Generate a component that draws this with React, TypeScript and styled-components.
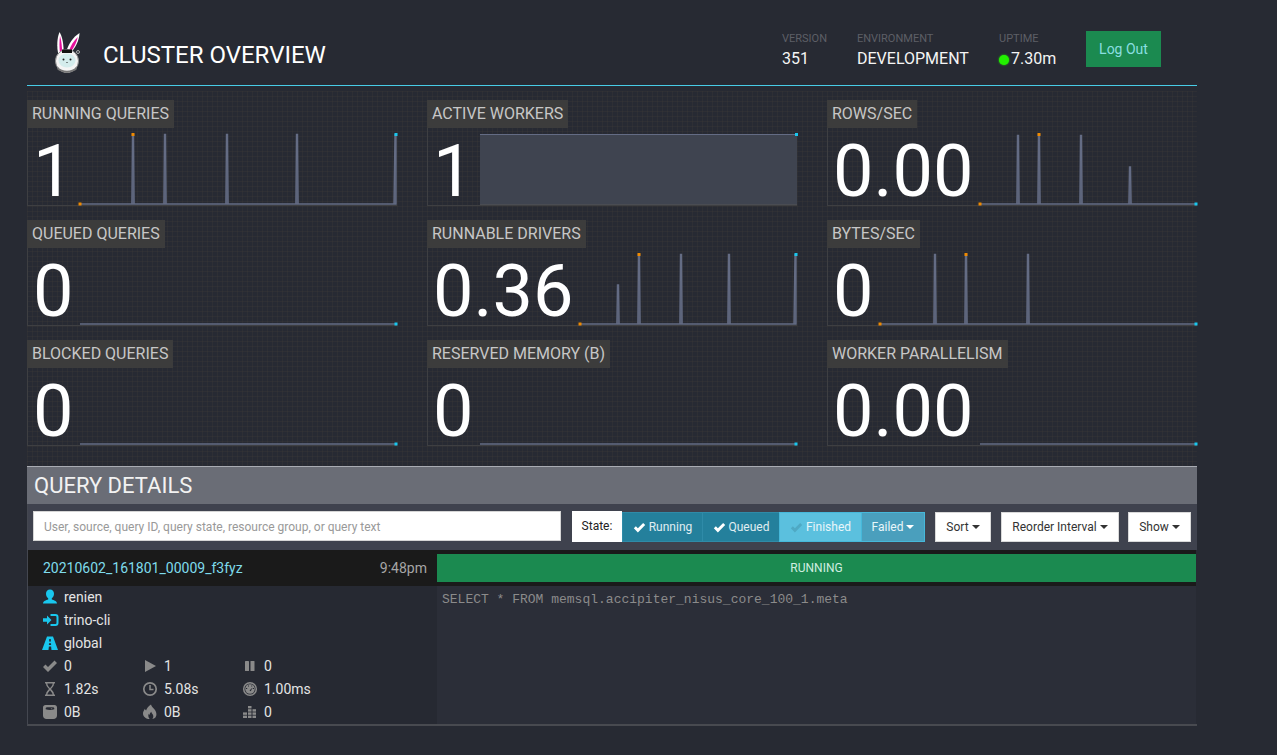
import React from "react";
import styled, { createGlobalStyle } from "styled-components";

const Global = createGlobalStyle`
  html, body { margin: 0; padding: 0; background: #272a33; }
  body { font-family: Roboto, "Liberation Sans", sans-serif; color: #fff; }
  * { box-sizing: border-box; }
`;

const Page = styled.div`
  width: 1170px;
  margin-left: 27px;
  height: 755px;
  padding-top: 22px;
`;

const Header = styled.header`
  height: 64px;
  display: flex;
  align-items: flex-start;
  border-bottom: 1px solid #48cde8;
  padding-right: 36px;
`;

const Brand = styled.div`
  display: flex;
  align-items: center;
  margin-left: 26px;
  gap: 22px;
  height: 42px;
  margin-top: 9px;
`;

const Title = styled.h1`
  margin: 0;
  font-size: 24px;
  font-weight: 400;
  line-height: 34px;
  color: #fff;
  position: relative;
  top: 3px;
`;

const Meta = styled.div`
  margin-left: auto;
  display: flex;
  align-items: flex-start;
  padding-top: 9px;
`;

const MetaItem = styled.div<{ $w: number }>`
  width: ${(p) => p.$w}px;
  display: flex;
  flex-direction: column;
`;

const MetaLabel = styled.span`
  font-size: 11px;
  line-height: 15px;
  color: #5d5f66;
  text-transform: uppercase;
`;

const MetaValue = styled.span`
  font-size: 16px;
  line-height: 21px;
  margin-top: 2px;
  color: #f5f5f5;
  display: flex;
  align-items: center;
  gap: 2px;
`;

const StatusDot = styled.span`
  width: 10px;
  height: 10px;
  border-radius: 50%;
  background: #22f000;
  box-shadow: 0 0 2px #22f000;
  margin-top: 2px;
`;

const LogOut = styled.button`
  width: 75px;
  height: 36px;
  border: 0;
  background: #1b8a50;
  color: #8adfe0;
  font: 400 14px Roboto, sans-serif;
`;

const StatsArea = styled.section`
  margin-top: 5px;
  height: 375px;
  padding-top: 9px;
  background-color: #272a33;
  background-image:
    linear-gradient(to right, rgba(66, 62, 56, 0.26) 1px, transparent 1px),
    linear-gradient(to bottom, rgba(66, 62, 56, 0.26) 1px, transparent 1px);
  background-size: 5px 5px;
  display: grid;
  grid-template-columns: repeat(3, 370px);
  grid-auto-rows: 106px;
  column-gap: 30px;
  row-gap: 14px;
`;

const Card = styled.div`
  position: relative;
  border-left: 1px solid #3e3f42;
  border-bottom: 1px solid #3e3f42;
  height: 106px;
  display: flex;
  flex-direction: column;
`;

const CardLabel = styled.div`
  align-self: flex-start;
  margin-left: -1px;
  height: 28px;
  padding: 0 5px;
  background: #3c3c3c;
  color: #c7c7c7;
  font-size: 16px;
  line-height: 28px;
  white-space: nowrap;
`;

const CardBody = styled.div`
  display: flex;
  flex: 1;
  min-height: 0;
`;

const BigValue = styled.div<{ $w: number }>`
  width: ${(p) => p.$w}px;
  flex: none;
  padding-left: 5px;
  font-size: 72px;
  line-height: 88px;
  font-weight: 400;
  color: #fff;
`;

const Spark = styled.svg`
  display: block;
  flex: none;
  overflow: visible;
  margin-top: 6px;
`;

const Details = styled.section`
  border-left: 1px solid #444750;
  border-bottom: 2px solid #484a50;
  height: 260px;
  display: flex;
  flex-direction: column;
`;

const DetailsHead = styled.div`
  margin-left: -1px;
  height: 38px;
  border-top: 1px solid #a9acb3;
  background: #6a6d76;
  color: #f2f2f2;
  font-size: 22px;
  line-height: 37px;
  padding-left: 7px;
`;

const Toolbar = styled.div`
  height: 46px;
  background: #3f424e;
  display: flex;
  align-items: flex-start;
  padding: 7px 0 0 5px;
`;

const Search = styled.input`
  width: 528px;
  height: 30px;
  border: 1px solid #d5d5d5;
  background: #fff;
  padding: 2px 10px 0;
  font: 400 12px Roboto, sans-serif;
  outline: none;
  &::placeholder { color: #999; opacity: 1; }
`;

const StateLabel = styled.span`
  margin-left: 11px;
  width: 50px;
  height: 31px;
  background: #fff;
  color: #222;
  font-size: 12px;
  line-height: 31px;
  text-align: center;
`;

const Seg = styled.div`
  display: flex;
  height: 30px;
  margin-top: 1px;
`;

const SegBtn = styled.div<{ $w: number; $kind: "on" | "off" | "drop" }>`
  width: ${(p) => p.$w}px;
  display: flex;
  align-items: center;
  justify-content: center;
  gap: 3px;
  font-size: 12px;
  border: 1px solid #46b8da;
  margin-left: -1px;
  &:first-child { margin-left: 0; }
  background: ${(p) =>
    p.$kind === "on" ? "#24809c" : p.$kind === "off" ? "#5bc0de" : "#4a9fbd"};
  border-color: ${(p) => (p.$kind === "on" ? "#2f8ba8" : "#46b8da")};
  color: ${(p) => (p.$kind === "on" ? "#e0eef2" : "#e8f6fa")};
`;

const Caret = styled.span<{ $light?: boolean }>`
  width: 0;
  height: 0;
  border-left: 4px solid transparent;
  border-right: 4px solid transparent;
  border-top: 4px solid ${(p) => (p.$light ? "#fff" : "#333")};
`;

const Plain = styled.div<{ $w: number; $ml: number }>`
  width: ${(p) => p.$w}px;
  margin-left: ${(p) => p.$ml}px;
  margin-top: 1px;
  height: 30px;
  background: #fff;
  border: 1px solid #d9d9d9;
  color: #333;
  font-size: 12px;
  display: flex;
  align-items: center;
  justify-content: center;
  gap: 3px;
`;

const QueryRow = styled.div`
  flex: 1;
  display: flex;
  min-height: 0;
  margin-right: 1px;
`;

const LeftCol = styled.div`
  width: 409px;
  flex: none;
  background: #262932;
`;

const RowHead = styled.div`
  height: 36px;
  background: #1a1a1a;
  display: flex;
  align-items: center;
  justify-content: space-between;
  padding: 0 10px 0 15px;
  font-size: 14px;
`;

const QueryId = styled.span`
  color: #7fdcec;
`;

const QueryTime = styled.span`
  color: #a6a6a6;
`;

const Rows = styled.div`
  padding: 0 0 0 15px;
`;

const InfoRow = styled.div`
  height: 23px;
  display: flex;
  align-items: center;
  font-size: 14px;
  color: #e4e4e4;
  &:first-child { margin-top: -1px; }
`;

const Stat = styled.div`
  width: 100px;
  display: flex;
  align-items: center;
`;

const IconBox = styled.span`
  width: 21px;
  flex: none;
  display: flex;
  align-items: center;
`;

const RightCol = styled.div`
  flex: 1;
  display: flex;
  flex-direction: column;
  background: #2b2e38;
`;

const BarWrap = styled.div`
  height: 36px;
  background: #1a1a1a;
  padding: 4px 0;
`;

const Bar = styled.div`
  height: 28px;
  background: #1b8a50;
  color: #cfeee0;
  font-size: 12px;
  line-height: 28px;
  text-align: center;
`;

const Sql = styled.pre`
  margin: 0;
  padding: 6px 5px;
  font-family: "Liberation Mono", monospace;
  font-size: 13px;
  line-height: 16px;
  color: #8b8b8b;
`;

const IconSvg = styled.svg`
  display: block;
  overflow: visible;
`;

type Props = { color: string };

const Svg: React.FC<React.PropsWithChildren<{ vx?: number }>> = ({ vx = 1, children }) => (
  <IconSvg width={16} height={16} viewBox={`${vx} 0 16 16`}>{children}</IconSvg>
);

const UserIcon = ({ color }: Props) => (
  <Svg>
    <path fill={color} d="M8 .5C5.500.5 4 2.200 4 4.700c0 2 1 3.700 2.200 4.500v1.300C4 11.300 1.300 11.800 1 14.500h14c-.3-2.700-3-3.200-5.200-4V9.200C11 8.400 12 6.700 12 4.700 12 2.200 10.500.5 8 .5z" />
  </Svg>
);
const LoginIcon = ({ color }: Props) => (
  <Svg vx={0}>
    <path fill={color} d="M0 6.300h4V3.500L8.500 8 4 12.500V9.700H0z" />
    <path fill="none" stroke={color} strokeWidth="2" d="M7.500 3h5a2 2 0 0 1 2 2v6a2 2 0 0 1-2 2h-5" />
  </Svg>
);
const RoadIcon = ({ color }: Props) => (
  <Svg>
    <path fill={color} fillRule="evenodd" d="M5 1.500h6l5 13.500H9.500l-.4-3.500H6.900l-.4 3.500H0zM7.300 4l-.2 2.500h1.800L8.700 4zM7 8.300 6.900 10h2.200L9 8.300z" />
  </Svg>
);
const CheckIcon = ({ color }: Props) => (
  <Svg>
    <path fill={color} d="M1 9l2.500-2.500L6 9l6.500-6.500L15 5l-9 9z" />
  </Svg>
);
const PlayIcon = ({ color }: Props) => (
  <Svg vx={0}><path fill={color} d="M2 2 13 8 2 14z" /></Svg>
);
const PauseIcon = ({ color }: Props) => (
  <Svg vx={0}>
    <rect fill={color} x="2" y="3" width="4" height="10" rx=".6" />
    <rect fill={color} x="7.500" y="3" width="4" height="10" rx=".6" />
  </Svg>
);
const HourglassIcon = ({ color }: Props) => (
  <Svg>
    <path fill={color} d="M3 1h10v1.500h-1c0 3-2 4-3 5.500 1 1.500 3 2.500 3 5.500h1V15H3v-1.500h1c0-3 2-4 3-5.500C6 6.500 4 5.500 4 2.500H3zm2.300 1.500C5.500 5 7 6 8 7.200 9 6 10.500 5 10.700 2.500zM5.400 13.500h5.200C10.300 11.500 9 10.500 8 9.200 7 10.500 5.700 11.500 5.400 13.500z" />
  </Svg>
);
const ClockIcon = ({ color }: Props) => (
  <Svg>
    <circle cx="8" cy="8" r="6.200" fill="none" stroke={color} strokeWidth="1.700" />
    <path fill="none" stroke={color} strokeWidth="1.500" d="M8 4v4.500h3.500" />
  </Svg>
);
const DashIcon = ({ color }: Props) => (
  <Svg>
    <circle cx="8" cy="8" r="6.300" fill="none" stroke={color} strokeWidth="1.500" />
    <circle cx="8" cy="8" r="4.800" fill={color} />
    <path fill="#262932" d="M4 7h1.200v1H4zM6 4.600h1v1H6zM9.200 4.600h1v1h-1zM10.800 7H12v1h-1.200zM7.500 9.500l3-3-1.700 3.700z" />
  </Svg>
);
const ScaleIcon = ({ color }: Props) => (
  <Svg>
    <path fill={color} fillRule="evenodd" d="M3.500 1h9C14 1 15 2 15 3.500v8C15 13.500 13.500 15 11.500 15h-7C2.500 15 1 13.500 1 11.500v-8C1 2 2 1 3.500 1zM5 3.200C4 3.200 3.500 4 3.700 5.200c2.700 1.100 6 1.100 8.600 0 .2-1.200-.3-2-1.300-2z" />
    <path fill={color} d="M8.500 4.900 10.800 3.600 9.500 5.200z" />
  </Svg>
);
const FireIcon = ({ color }: Props) => (
  <Svg>
    <path fill={color} fillRule="evenodd" d="M9 .5c.5 2.500 2.300 3.200 4 5.500 1.700 2.400 2 5.500.4 7.400-.8.900-1.900 1.500-3.100 1.700 1.100-1.500 1.300-3 .6-4.400-.4-.8-1.400-1.600-1.600-2.900-.9 1-1.800 2-1.800 3.300-.4-.3-.7-.8-.8-1.300-.7 1.300-.5 3.700 1 5.300C4 15 1.300 12.600 1 10c-.2-2.200 1-3.700 1.900-5.300.2.800.6 1.400 1.200 1.900C4.500 4.500 6.700 2 9 .5z" />
  </Svg>
);
const BarsIcon = ({ color }: Props) => (
  <Svg vx={0}>
    <g fill={color}>
      <rect x="5" y="2" width="3.500" height="2.400" />
      <rect x="5" y="5.200" width="3.500" height="2.400" /><rect x="9.500" y="5.200" width="3.500" height="2.400" />
      <rect x="5" y="8.400" width="3.500" height="2.400" /><rect x="9.500" y="8.400" width="3.500" height="2.400" /><rect x="0" y="8.400" width="4" height="2.400" />
      <rect x="5" y="11.600" width="3.500" height="2.400" /><rect x="9.500" y="11.600" width="3.500" height="2.400" /><rect x="0" y="11.600" width="4" height="2.400" />
    </g>
  </Svg>
);

const Bunny = () => (
  <svg width="28" height="41" viewBox="0 0 28 41">
    <path d="M5.500 23C3.500 15 4 6 6.500 0c3 5 4.500 13 4 23z" fill="#fff" />
    <path d="M7 21C6.200 15 6.300 9 7 4c1.500 5 2.200 11 2 17z" fill="#e5119b" />
    <path d="M13 20c2.500-8 7-15 13.500-19 0 7-4.500 16-10 21z" fill="#fff" />
    <path d="M15.800 19c2-5.500 5-10.500 9-14-1 5.500-4 11-7.300 15z" fill="#e5119b" />
    <circle cx="25" cy="20" r="1.500" fill="none" stroke="#aaa" />
    <circle cx="14" cy="29" r="11.500" fill="#f4f4f4" stroke="#8a8a8a" strokeWidth="1" />
    <path d="M5 35c4 5 14 5 18 0l1 2c-4 4.500-16 4.500-20 0z" fill="#777" />
    <rect x="9" y="17.500" width="10" height="3.500" fill="#111" />
    <ellipse cx="14" cy="28.500" rx="8.500" ry="7" fill="#d4ecec" />
    <circle cx="10.500" cy="27.500" r="1" fill="#222" />
    <circle cx="17.500" cy="27.500" r="1" fill="#222" />
    <path d="M13 30h2l-1 1z" fill="#222" />
  </svg>
);

type Chart = {
  w: number;
  h: number;
  spikes?: [number, number][];
  maxAt?: number;
  endTop?: boolean;
  fillAll?: boolean;
};

const LINE = "#646c84";

const Sparkline = ({ w, h, spikes = [], maxAt, endTop, fillAll }: Chart) => {
  const base = h - 2;
  if (fillAll) {
    return (
      <Spark width={w} height={h} viewBox={`0 0 ${w} ${h}`}>
        <rect x="0" y="0.500" width={w} height={base + 0.5} fill="#3f4450" />
        <path d={`M0 0.500H${w}`} stroke={LINE} fill="none" />
        <path d={`M0 ${base + 0.5}H${w}`} stroke="#4a4c52" fill="none" />
        <rect x={w - 2} y="-1" width="3" height="3" fill="#19c7ee" />
      </Spark>
    );
  }
  const pts: string[] = [`0,${base}`];
  spikes.forEach(([x, top]) => {
    pts.push(`${x - 1.1},${base}`, `${x - 0.5},${top}`, `${x + 0.5},${top}`, `${x + 1.1},${base}`);
  });
  if (endTop) pts.push(`${w - 3},${base}`, `${w - 2},0.500`, `${w - 1},0.500`, `${w - 1},${base}`);
  else pts.push(`${w - 1},${base}`);
  const d = "M" + pts.join(" L") + " Z";
  return (
    <Spark width={w} height={h} viewBox={`0 0 ${w} ${h}`}>
      <path d={d} fill="#4f566a" stroke={LINE} strokeWidth="1.400" />
      <rect x="-1.500" y={base - 1.5} width="3" height="3" fill="#f08a00" />
      {maxAt !== undefined ? <rect x={maxAt - 1.5} y="-1" width="3" height="3" fill="#f08a00" /> : null}
      <rect x={w - 2.5} y={endTop ? -1 : base - 1.5} width="3" height="3" fill="#19c7ee" />
    </Spark>
  );
};

const FlatLine = ({ w, h }: { w: number; h: number }) => {
  const base = h - 2;
  return (
    <Spark width={w} height={h} viewBox={`0 0 ${w} ${h}`}>
      <path d={`M0 ${base}H${w}`} stroke={LINE} strokeWidth="1.500" fill="none" />
      <rect x={w - 2.5} y={base - 1.5} width="3" height="3" fill="#19c7ee" />
    </Spark>
  );
};

const h = 72;
const cards: { label: string; value: string; vw: number; chart: React.ReactNode }[] = [
  {
    label: "Running Queries", value: "1", vw: 52,
    chart: <Sparkline w={317} h={h} maxAt={53} endTop spikes={[[53, 0.5], [85, 0.5], [147, 0.5], [217, 0.5]]} />,
  },
  {
    label: "Active Workers", value: "1", vw: 52,
    chart: <Sparkline w={317} h={h} fillAll />,
  },
  {
    label: "Rows/sec", value: "0.00", vw: 152,
    chart: <Sparkline w={217} h={h} maxAt={59} spikes={[[38, 1.5], [59, 0.5], [101, 1.5], [150, 33]]} />,
  },
  { label: "Queued Queries", value: "0", vw: 52, chart: <FlatLine w={317} h={h} /> },
  {
    label: "Runnable Drivers", value: "0.36", vw: 152,
    chart: <Sparkline w={217} h={h} maxAt={59} endTop spikes={[[38, 31], [59, 0.5], [101, 0.5], [149, 0.5]]} />,
  },
  {
    label: "Bytes/sec", value: "0", vw: 52,
    chart: <Sparkline w={317} h={h} maxAt={86} spikes={[[55, 0.5], [86, 0.5], [148, 0.5]]} />,
  },
  { label: "Blocked Queries", value: "0", vw: 52, chart: <FlatLine w={317} h={h} /> },
  { label: "Reserved Memory (B)", value: "0", vw: 52, chart: <FlatLine w={317} h={h} /> },
  { label: "Worker Parallelism", value: "0.00", vw: 152, chart: <FlatLine w={217} h={h} /> },
];

const CYAN = "#19c7ee";
const GRAY = "#8a8a8a";

const stats = [
  [
    [<CheckIcon color={GRAY} />, "0"],
    [<PlayIcon color={GRAY} />, "1"],
    [<PauseIcon color={GRAY} />, "0"],
  ],
  [
    [<HourglassIcon color={GRAY} />, "1.82s"],
    [<ClockIcon color={GRAY} />, "5.08s"],
    [<DashIcon color={GRAY} />, "1.00ms"],
  ],
  [
    [<ScaleIcon color={GRAY} />, "0B"],
    [<FireIcon color={GRAY} />, "0B"],
    [<BarsIcon color={GRAY} />, "0"],
  ],
] as [React.ReactNode, string][][];

const Check = ({ color }: { color: string }) => (
  <svg width="13" height="13" viewBox="0 0 16 16">
    <path fill={color} d="M1 9l2.500-2.500L6 9l6.500-6.500L15 5l-9 9z" />
  </svg>
);

export default function App() {
  return (
    <Page>
      <Global />
      <Header>
        <Brand>
          <Bunny />
          <Title>CLUSTER OVERVIEW</Title>
        </Brand>
        <Meta>
          <MetaItem $w={75}>
            <MetaLabel>Version</MetaLabel>
            <MetaValue>351</MetaValue>
          </MetaItem>
          <MetaItem $w={142}>
            <MetaLabel>Environment</MetaLabel>
            <MetaValue>DEVELOPMENT</MetaValue>
          </MetaItem>
          <MetaItem $w={87}>
            <MetaLabel>Uptime</MetaLabel>
            <MetaValue><StatusDot />7.30m</MetaValue>
          </MetaItem>
          <LogOut>Log Out</LogOut>
        </Meta>
      </Header>

      <StatsArea>
        {cards.map((c) => (
          <Card key={c.label}>
            <CardLabel>{c.label.toUpperCase()}</CardLabel>
            <CardBody>
              <BigValue $w={c.vw}>{c.value}</BigValue>
              {c.chart}
            </CardBody>
          </Card>
        ))}
      </StatsArea>

      <Details>
        <DetailsHead>QUERY DETAILS</DetailsHead>
        <Toolbar>
          <Search placeholder="User, source, query ID, query state, resource group, or query text" />
          <StateLabel>State:</StateLabel>
          <Seg>
            <SegBtn $w={81} $kind="on"><Check color="#fff" />Running</SegBtn>
            <SegBtn $w={78} $kind="on"><Check color="#fff" />Queued</SegBtn>
            <SegBtn $w={83} $kind="off"><Check color="#4fa9c4" />Finished</SegBtn>
            <SegBtn $w={64} $kind="drop">Failed <Caret $light /></SegBtn>
          </Seg>
          <Plain $w={56} $ml={10}>Sort <Caret /></Plain>
          <Plain $w={118} $ml={10}>Reorder Interval <Caret /></Plain>
          <Plain $w={63} $ml={9}>Show <Caret /></Plain>
        </Toolbar>
        <QueryRow>
          <LeftCol>
            <RowHead>
              <QueryId>20210602_161801_00009_f3fyz</QueryId>
              <QueryTime>9:48pm</QueryTime>
            </RowHead>
            <Rows>
              <InfoRow><IconBox><UserIcon color={CYAN} /></IconBox>renien</InfoRow>
              <InfoRow><IconBox><LoginIcon color={CYAN} /></IconBox>trino-cli</InfoRow>
              <InfoRow><IconBox><RoadIcon color={CYAN} /></IconBox>global</InfoRow>
              {stats.map((row, i) => (
                <InfoRow key={i}>
                  {row.map(([icon, v], j) => (
                    <Stat key={j}><IconBox>{icon}</IconBox>{v}</Stat>
                  ))}
                </InfoRow>
              ))}
            </Rows>
          </LeftCol>
          <RightCol>
            <BarWrap><Bar>RUNNING</Bar></BarWrap>
            <Sql>SELECT * FROM memsql.accipiter_nisus_core_100_1.meta</Sql>
          </RightCol>
        </QueryRow>
      </Details>
    </Page>
  );
}
